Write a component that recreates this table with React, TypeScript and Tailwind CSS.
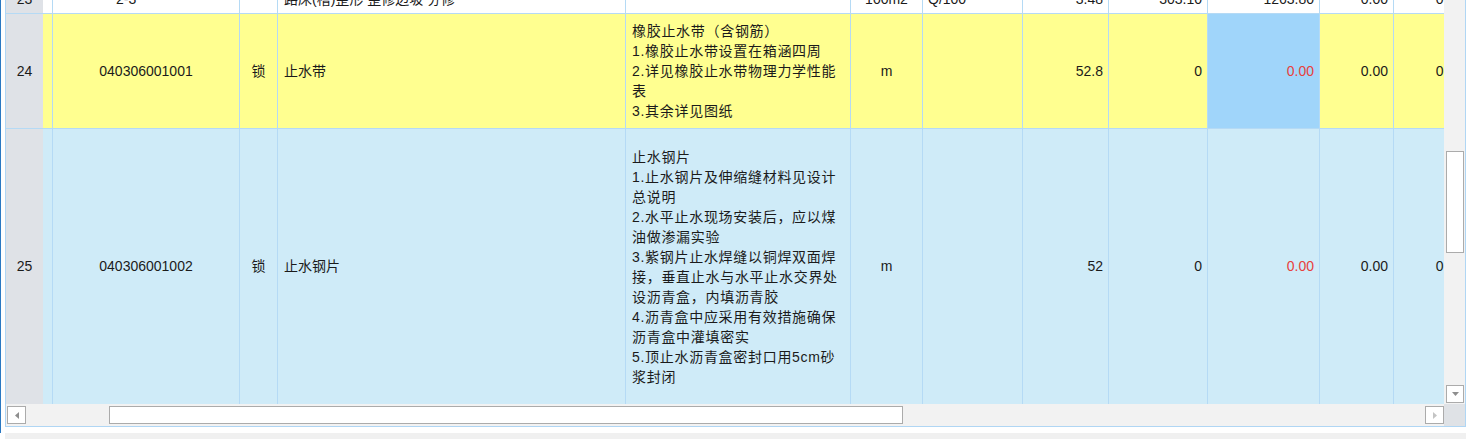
import type { ReactNode } from 'react';

type Align = 'left' | 'center' | 'right';

function Cell({
  w,
  align = 'left',
  className = '',
  children,
}: {
  w: string;
  align?: Align;
  className?: string;
  children?: ReactNode;
}) {
  const place =
    align === 'center' ? 'justify-center' : align === 'right' ? 'justify-end pr-[5px]' : 'pl-[5px]';
  return (
    <div className={`flex shrink-0 items-center border-r border-[#b5daf5] ${w} ${place} ${className}`}>
      {children}
    </div>
  );
}

function Row({ no, className, children }: { no: string; className: string; children: ReactNode }) {
  return (
    <div className={`flex shrink-0 border-b border-[#b5daf5] ${className}`}>
      <div className="flex w-[37px] shrink-0 items-center justify-center bg-[#dfe2e7]">{no}</div>
      <div className="w-[10px] shrink-0 border-r border-[#b5daf5]" />
      {children}
    </div>
  );
}

function Lines({ items }: { items: string[] }) {
  return (
    <div className="flex flex-col text-[14px] leading-[20px] tracking-[0.7px]">
      {items.map((t) => (
        <span key={t} className="whitespace-nowrap">
          {t}
        </span>
      ))}
    </div>
  );
}

const desc24 = ['橡胶止水带（含钢筋）', '1.橡胶止水带设置在箱涵四周', '2.详见橡胶止水带物理力学性能', '表', '3.其余详见图纸'];

const desc25 = [
  '止水钢片',
  '1.止水钢片及伸缩缝材料见设计',
  '总说明',
  '2.水平止水现场安装后，应以煤',
  '油做渗漏实验',
  '3.紫钢片止水焊缝以铜焊双面焊',
  '接，垂直止水与水平止水交界处',
  '设沥青盒，内填沥青胶',
  '4.沥青盒中应采用有效措施确保',
  '沥青盒中灌填密实',
  '5.顶止水沥青盒密封口用5cm砂',
  '浆封闭',
];

function Grid() {
  return (
    <div className="h-[404px] w-[1438px] overflow-hidden">
      <div className="flex w-max flex-col">
        <Row no="23" className="-mt-[15px] h-[29px] bg-white">
          <Cell w="w-[187px]" className="pl-[63px]">2-3</Cell>
          <Cell w="w-[38px]" />
          <Cell w="w-[348px]" className="pl-[6px]">路床(槽)整形 整修边坡 夯修</Cell>
          <Cell w="w-[225px]" />
          <Cell w="w-[72px]" align="center">100m2</Cell>
          <Cell w="w-[100px]">Q/100</Cell>
          <Cell w="w-[86px]" align="right">3.48</Cell>
          <Cell w="w-[99px]" align="right">303.10</Cell>
          <Cell w="w-[112px]" align="right">1263.80</Cell>
          <Cell w="w-[74px]" align="right">0.00</Cell>
          <Cell w="w-[75px]" align="right">0.00</Cell>
        </Row>
        <Row no="24" className="h-[115px] bg-[#ffff90]">
          <Cell w="w-[187px]" align="center">040306001001</Cell>
          <Cell w="w-[38px]" align="center">锁</Cell>
          <Cell w="w-[348px]" className="pl-[6px]">止水带</Cell>
          <Cell w="w-[225px]" className="pl-[6px]">
            <Lines items={desc24} />
          </Cell>
          <Cell w="w-[72px]" align="center">m</Cell>
          <Cell w="w-[100px]" />
          <Cell w="w-[86px]" align="right">52.8</Cell>
          <Cell w="w-[99px]" align="right">0</Cell>
          <Cell w="w-[112px]" align="right" className="bg-[#a0d5fa] text-[#e8403c]">0.00</Cell>
          <Cell w="w-[74px]" align="right">0.00</Cell>
          <Cell w="w-[75px]" align="right">0.00</Cell>
        </Row>
        <Row no="25" className="h-[276px] bg-[#cfebf8]">
          <Cell w="w-[187px]" align="center">040306001002</Cell>
          <Cell w="w-[38px]" align="center">锁</Cell>
          <Cell w="w-[348px]" className="pl-[6px]">止水钢片</Cell>
          <Cell w="w-[225px]" className="pl-[6px]">
            <Lines items={desc25} />
          </Cell>
          <Cell w="w-[72px]" align="center">m</Cell>
          <Cell w="w-[100px]" />
          <Cell w="w-[86px]" align="right">52</Cell>
          <Cell w="w-[99px]" align="right">0</Cell>
          <Cell w="w-[112px]" align="right" className="text-[#e8403c]">0.00</Cell>
          <Cell w="w-[74px]" align="right">0.00</Cell>
          <Cell w="w-[75px]" align="right">0.00</Cell>
        </Row>
      </div>
    </div>
  );
}

function VScroll() {
  return (
    <div className="flex h-[404px] w-[21px] flex-col bg-[#f2f2f2]">
      <div className="ml-[2px] mt-[151px] h-[102px] w-[18px] border border-[#ababab] bg-white" />
      <div className="flex-1" />
      <div className="mb-[1px] ml-[2px] flex h-[18px] w-[18px] items-center justify-center border border-[#ababab] bg-white">
        <svg width="7" height="4" viewBox="0 0 7 4">
          <path d="M0 0h7L3.5 4z" fill="#8e8e8e" />
        </svg>
      </div>
    </div>
  );
}

function HScroll() {
  return (
    <div className="flex h-[22px] w-[1438px] items-start bg-[#f2f2f2] pt-[2px]">
      <div className="ml-[1px] flex h-[18px] w-[19px] items-center justify-center border border-[#ababab] bg-white">
        <svg width="4" height="7" viewBox="0 0 4 7">
          <path d="M4 0v7L0 3.5z" fill="#8e8e8e" />
        </svg>
      </div>
      <div className="ml-[83px] h-[18px] w-[794px] border border-[#ababab] bg-white" />
      <div className="flex-1" />
      <div className="flex h-[18px] w-[19px] items-center justify-center border border-[#ababab] bg-white">
        <svg width="4" height="7" viewBox="0 0 4 7">
          <path d="M0 0v7L4 3.5z" fill="#c4c4c4" />
        </svg>
      </div>
    </div>
  );
}

export default function App() {
  return (
    <div className="flex h-[439px] w-[1467px] bg-white font-['Liberation_Sans','Noto_Sans_CJK_SC',sans-serif] text-[14px] text-[#1b1b1b]">
      <div className="h-[433px] w-[1px] bg-[#2a78c2]" />
      <div className="ml-[4px] flex flex-col">
        <div className="flex h-[427px] w-[1461px] flex-col border-b border-l border-r border-[#b0d6f4]">
          <div className="flex">
            <Grid />
            <VScroll />
          </div>
          <div className="flex">
            <HScroll />
            <div className="h-[22px] w-[21px] bg-[#dfe2e6]" />
          </div>
        </div>
        <div className="mt-[6px] h-[6px] bg-[#f0f0f0]" />
      </div>
    </div>
  );
}
